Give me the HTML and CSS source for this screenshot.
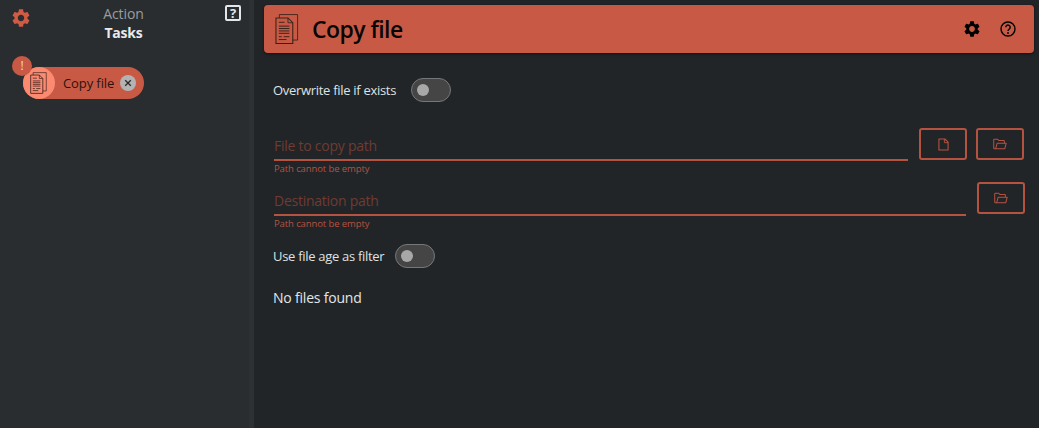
FILE: index.html
```html
<!DOCTYPE html>
<html lang="en">
<head>
<meta charset="utf-8">
<title>Copy file</title>
<link rel="stylesheet" href="styles.css">
</head>
<body>
<svg class="defs" width="0" height="0">
  <symbol id="doc" viewBox="0 0 26 32">
    <path d="M4.500 4.500V1h19v26.500h-5" fill="none" stroke="currentColor" stroke-width=".9"/>
    <path d="M1 4.500h12.500l5 5V31H1z" fill="none" stroke="currentColor" stroke-width="1.100"/>
    <path d="M13.500 4.500v5h5" fill="none" stroke="currentColor" stroke-width=".9"/>
    <path d="M4 9h6M4 13h11M4 15.500h11M4 18h11M4 20.500h11M4 24h3M9 24h6M4 27h8" fill="none" stroke="currentColor" stroke-width="1"/>
  </symbol>
  <symbol id="gear" viewBox="2 2 20 20">
    <path d="M19.140 12.940c.04-.3.06-.61.06-.94 0-.32-.02-.64-.07-.94l2.030-1.580c.18-.14.23-.41.12-.61l-1.920-3.320c-.12-.22-.37-.29-.59-.22l-2.390.96c-.5-.38-1.030-.7-1.620-.94l-.36-2.540c-.04-.24-.24-.41-.48-.41h-3.840c-.24 0-.43.17-.47.41l-.36 2.540c-.59.24-1.130.57-1.620.94l-2.390-.96c-.22-.08-.47 0-.59.22L2.740 8.870c-.12.21-.08.47.12.61l2.030 1.580c-.05.3-.09.63-.09.94s.02.64.07.94l-2.030 1.580c-.18.14-.23.41-.12.61l1.920 3.320c.12.22.37.29.59.22l2.390-.96c.5.38 1.030.7 1.620.94l.36 2.540c.05.24.24.41.48.41h3.840c.24 0 .44-.17.47-.41l.36-2.540c.59-.24 1.130-.56 1.620-.94l2.390.96c.22.08.47 0 .59-.22l1.920-3.320c.12-.22.07-.47-.12-.61l-2.010-1.580zM12 15.600c-1.980 0-3.600-1.620-3.600-3.600s1.620-3.600 3.600-3.600 3.600 1.620 3.600 3.600-1.620 3.600-3.600 3.600z" fill="currentColor"/>
  </symbol>
  <symbol id="folder" viewBox="0 0 16 14">
    <path d="M3 12.500H1.500a.8.8 0 0 1-.8-.8V2.200c0-.5.400-.8.800-.8h3.700l1.500 1.600h5.600c.5 0 .8.400.8.800V6" fill="none" stroke="currentColor" stroke-width="1.200"/>
    <path d="M3 12.500l1.600-6.300h10.600l-1.600 6.300z" fill="none" stroke="currentColor" stroke-width="1.200" stroke-linejoin="round"/>
  </symbol>
</svg>

<div class="app">
  <aside class="sidebar">
    <header class="side-head">
      <button class="gear-btn" type="button" aria-label="Settings"><svg class="gear-small"><use href="#gear"/></svg></button>
      <div class="side-title">
        <div class="side-action">Action</div>
        <div class="side-tasks">Tasks</div>
      </div>
      <button class="help-btn" type="button" aria-label="Help">?</button>
    </header>
    <div class="task-list">
      <div class="chip">
        <span class="chip-badge">!</span>
        <span class="chip-icon"><svg class="chip-doc"><use href="#doc"/></svg></span>
        <span class="chip-label">Copy file</span>
        <span class="chip-close">
          <svg class="close-x" viewBox="0 0 10 10"><path d="M1.500 1.500l7 7M8.500 1.500l-7 7" stroke="currentColor" stroke-width="1.600" fill="none"/></svg>
        </span>
      </div>
    </div>
  </aside>
  <div class="splitter"></div>
  <main class="main">
    <div class="title-bar">
      <svg class="title-doc"><use href="#doc"/></svg>
      <h1 class="title">Copy file</h1>
      <div class="title-actions">
        <svg class="title-gear"><use href="#gear"/></svg>
        <svg class="title-help" viewBox="0 0 16 16">
          <circle cx="8" cy="8" r="7" fill="none" stroke="currentColor" stroke-width="1.400"/>
          <path d="M5.800 6.200a2.200 2.200 0 1 1 3.500 1.800c-.8.600-1.300 1-1.300 2" fill="none" stroke="currentColor" stroke-width="1.400"/>
          <circle cx="8" cy="12" r=".9" fill="currentColor"/>
        </svg>
      </div>
    </div>

    <div class="content">
      <div class="toggle-row first-toggle">
        <span class="toggle-label">Overwrite file if exists</span>
        <span class="toggle"><span class="knob"></span></span>
      </div>

      <div class="path-row path-one">
        <div class="field">
          <div class="field-input">File to copy path</div>
          <div class="field-error">Path cannot be empty</div>
        </div>
        <button class="icon-btn" type="button" aria-label="Pick file">
          <svg class="file-icon" viewBox="0 0 12 14"><path d="M1 1h6.500L11 4.500V13H1z" fill="none" stroke="currentColor" stroke-width="1.200" stroke-linejoin="round"/><path d="M7 1v4h4" fill="none" stroke="currentColor" stroke-width="1"/></svg>
        </button>
        <button class="icon-btn" type="button" aria-label="Pick folder"><svg class="folder-icon"><use href="#folder"/></svg></button>
      </div>

      <div class="path-row path-two">
        <div class="field">
          <div class="field-input">Destination path</div>
          <div class="field-error">Path cannot be empty</div>
        </div>
        <button class="icon-btn" type="button" aria-label="Pick folder"><svg class="folder-icon"><use href="#folder"/></svg></button>
      </div>

      <div class="toggle-row second-toggle">
        <span class="toggle-label">Use file age as filter</span>
        <span class="toggle"><span class="knob"></span></span>
      </div>

      <p class="empty">No files found</p>
    </div>
  </main>
</div>
</body>
</html>
```

FILE: styles.css
```css
* { box-sizing: border-box; }
html, body { margin: 0; height: 100%; }
body {
  background: #212528;
  color: #e4e6e7;
  font-family: "Open Sans", "Noto Sans", sans-serif;
  overflow: hidden;
}
.defs { position: absolute; }
button { font: inherit; padding: 0; background: none; cursor: pointer; }

.app { display: flex; height: 428px; }

.sidebar { width: 249px; background: #292d30; flex: none; }
.splitter { width: 5px; background: #2d3134; flex: none; }
.main { flex: 1; min-width: 0; padding: 5px 5px 0 10px; }

.side-head {
  display: flex;
  align-items: flex-start;
  padding: 5px 8px 0 12px;
}
.gear-btn { border: 0; color: #cf5b45; width: 18px; height: 18px; margin-top: 4px; display: flex; }
.gear-small { width: 18px; height: 18px; }
.side-title { flex: 1; text-align: center; padding-right: 8px; }
.side-action { font-size: 14px; line-height: 18px; color: #9a9d9f; letter-spacing: -.1px; }
.side-tasks { font-size: 14px; line-height: 19px; font-weight: 700; color: #e8eaeb; letter-spacing: -.2px; }
.help-btn {
  width: 16px;
  height: 16px;
  border: 2px solid #e4e6e7;
  border-radius: 2px;
  color: #e4e6e7;
  font-size: 13px;
  font-weight: 700;
  line-height: 12px;
  text-align: center;
}

.task-list { padding: 25px 0 0 23px; }
.chip {
  position: relative;
  display: inline-flex;
  align-items: center;
  width: 121px;
  height: 32px;
  background: #c85a45;
  border-radius: 16px;
  color: #2a1410;
}
.chip-badge {
  position: absolute;
  left: -11px;
  top: -11px;
  width: 20px;
  height: 20px;
  border-radius: 50%;
  background: #c85a45;
  color: #f1d9d3;
  font-size: 12px;
  line-height: 19px;
  text-align: center;
}
.chip-icon {
  width: 32px;
  height: 32px;
  border-radius: 50%;
  background: #fb8a71;
  display: flex;
  align-items: center;
  justify-content: center;
  flex: none;
}
.chip-doc { width: 18px; height: 24px; color: #2b1a16; }
.chip-label { font-size: 13px; line-height: 18px; margin-left: 8px; white-space: nowrap; letter-spacing: -.1px; }
.chip-close {
  width: 16px;
  height: 16px;
  margin-left: auto;
  margin-right: 8px;
  border-radius: 50%;
  background: #b3b3b3;
  color: #2a2a2a;
  display: flex;
  align-items: center;
  justify-content: center;
}
.close-x { width: 8px; height: 8px; }

.title-bar {
  display: flex;
  align-items: center;
  height: 48px;
  background: #c85a45;
  border-radius: 4px;
  padding: 0 18px 0 11px;
  box-shadow: 0 1px 3px rgba(0, 0, 0, .5);
  color: #000;
}
.title-doc { width: 25px; height: 32px; color: #3a2019; flex: none; }
.title { margin: 0 0 0 12px; font-size: 23px; line-height: 32px; font-weight: 600; color: #0a0503; flex: 1; letter-spacing: -.55px; }
.title-actions { display: flex; align-items: center; gap: 20px; }
.title-gear { width: 16px; height: 16px; }
.title-help { width: 16px; height: 16px; }

.content { padding: 0 10px 0 9px; }

.toggle-row { display: flex; align-items: center; gap: 15px; }
.first-toggle { margin-top: 25px; }
.second-toggle { margin-top: 13px; gap: 11px; }
.toggle-label { font-size: 13px; line-height: 24px; color: #dfe2e3; white-space: nowrap; letter-spacing: -.3px; }
.toggle {
  width: 40px;
  height: 24px;
  border-radius: 12px;
  background: #454545;
  border: 1px solid #75787a;
  display: flex;
  align-items: center;
  padding-left: 5px;
}
.knob { width: 12px; height: 12px; border-radius: 50%; background: #a8a8a8; }

.path-row { display: flex; align-items: flex-start; gap: 9px; margin-left: 1px; }
.path-one { margin-top: 26px; }
.path-two { margin-top: 7px; gap: 11px; margin-right: -1px; }
.path-one .field { margin-right: 2px; }
.field { flex: 1; min-width: 0; }
.field-input {
  height: 33px;
  padding-top: 8px;
  font-size: 14px;
  line-height: 20px;
  color: #6f3b32;
  border-bottom: 2px solid #b55240;
  letter-spacing: -.25px;
}
.field-error { font-size: 9.500px; line-height: 14px; color: #b55240; padding-top: 1px; letter-spacing: -.1px; }
.icon-btn {
  width: 48px;
  height: 32px;
  border: 2px solid #b55240;
  border-radius: 3px;
  color: #b55240;
  display: flex;
  align-items: center;
  justify-content: center;
  flex: none;
}
.path-two .icon-btn { margin-top: -1px; }
.file-icon { width: 11px; height: 13px; }
.folder-icon { width: 14px; height: 12px; }

.empty { margin: 20px 0 0; font-size: 14px; line-height: 20px; color: #e4e6e7; letter-spacing: -.2px; }
```
